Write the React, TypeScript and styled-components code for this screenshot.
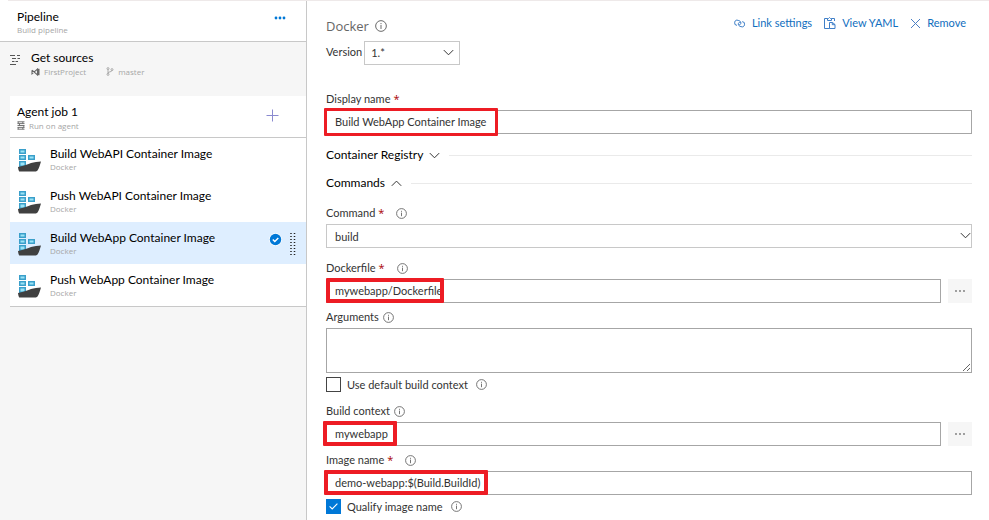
import React, { useState } from 'react';
import styled, { createGlobalStyle, css } from 'styled-components';

const GlobalStyle = createGlobalStyle`
  * { box-sizing: border-box; }
  body {
    margin: 0;
    background: #fff;
    color: #333;
    font-family: Lato, "Open Sans", sans-serif;
    font-size: 11px;
  }
  button, input, select, textarea { font: inherit; color: inherit; margin: 0; }
  button { border: 0; padding: 0; background: none; cursor: pointer; }
  svg { display: block; flex: none; }
`;

const Page = styled.div`
  display: flex;
  min-height: 100vh;
`;

/* ---------- Sidebar ---------- */

const Sidebar = styled.aside`
  flex: 0 0 307px;
  display: flex;
  flex-direction: column;
  background: #f6f6f6;
  border-right: 1px solid #c8c8c8;
`;

const Entry = styled.div`
  display: flex;
  height: 42px;
  padding: 7px 10px 0 7px;
`;

const PipelineHeader = styled(Entry)`
  padding: 8px 20px 0 17px;
  background: #fff;
  border-bottom: 1px solid #c8c8c8;
`;

const Sources = styled(Entry)`
  height: 54px;
  padding-left: 9px;
  gap: 9px;
`;

const JobCard = styled.section`
  margin-left: 10px;
  background: #fff;
  border-bottom: 1px solid #c8c8c8;
`;

const JobHeader = styled(Entry)`
  padding-right: 27px;
  border-bottom: 1px solid #c8c8c8;
`;

const TaskList = styled.ul`
  list-style: none;
  margin: 0;
  padding: 0;
`;

const Task = styled.li<{ $selected?: boolean }>`
  display: flex;
  height: 42px;
  padding: 7px 10px 0 8px;
  gap: 9px;
  background: ${(p) => (p.$selected ? '#deeeff' : '#fff')};
`;

const EntryText = styled.div`
  flex: 1;
  min-width: 0;
`;

const EntryTitle = styled.div`
  font-size: 12px;
  line-height: 18px;
  color: #000;
  white-space: nowrap;
`;

const EntrySub = styled.div`
  display: flex;
  align-items: center;
  gap: 4px;
  font-family: "Open Sans", "Noto Sans", sans-serif;
  font-size: 8px;
  line-height: 8px;
  color: #a6a6a6;
`;

const Branch = styled.span`
  display: flex;
  align-items: center;
  gap: 4px;
  margin-left: 16px;
`;

const SideButton = styled.button`
  display: flex;
  align-self: flex-start;
  align-items: center;
  height: 20px;
`;

const AddButton = styled(SideButton)`
  height: 24px;
`;

const SourcesIcon = styled.div`
  padding-top: 6px;
`;

const TaskIcon = styled.div`
  padding-top: 4px;
`;

const TaskMarks = styled.div`
  display: flex;
  align-items: flex-start;
  align-self: flex-start;
  gap: 8px;
  padding-top: 4px;
`;

/* ---------- Details ---------- */

const Details = styled.main`
  flex: 1;
  min-width: 0;
  padding: 16px 17px 6px 19px;
`;

const DetailsHeader = styled.header`
  display: flex;
  justify-content: space-between;
  align-items: flex-start;
`;

const Heading = styled.h1`
  display: flex;
  align-items: center;
  gap: 6px;
  margin: 0;
  font-family: "Open Sans", "Noto Sans", sans-serif;
  font-size: 13px;
  font-weight: 400;
  line-height: 20px;
  color: #666;
`;

const Actions = styled.div`
  display: flex;
  gap: 12px;
  padding-right: 6px;
`;

const Action = styled.button`
  display: flex;
  align-items: center;
  gap: 6px;
  line-height: 14px;
  color: #106ebe;
`;

const VersionRow = styled.div`
  display: flex;
  gap: 2px;
  margin-top: 5px;
  line-height: 22px;
`;

const SelectBox = styled.div<{ $compact?: boolean }>`
  position: relative;
  width: ${(p) => (p.$compact ? '96px' : '100%')};

  select {
    display: block;
    width: 100%;
    height: 24px;
    padding: 0 20px 0 ${(p) => (p.$compact ? '6px' : '8px')};
    border: 1px solid #c8c8c8;
    border-radius: 0;
    background: #fff;
    appearance: none;
  }

  svg {
    position: absolute;
    top: 8px;
    right: ${(p) => (p.$compact ? '6px' : '1px')};
    pointer-events: none;
  }
`;

type RowSize = 'first' | 'tall' | 'medium';

const rowHeights: Record<RowSize, number> = { first: 45, tall: 31, medium: 30 };

const LabelRow = styled.div<{ $size?: RowSize }>`
  display: flex;
  align-items: flex-end;
  height: ${(p) => (p.$size ? rowHeights[p.$size] : 25)}px;
  padding-bottom: 4px;
  line-height: 14px;
`;

const Required = styled.span`
  margin-left: 3px;
  font-family: "Open Sans", "Noto Sans", sans-serif;
  line-height: 10px;
  color: #a80000;
`;

const Info = styled.span<{ $gap: number }>`
  display: flex;
  margin-left: ${(p) => p.$gap}px;
  padding-bottom: 1px;
`;

const FieldRow = styled.div`
  position: relative;
  display: flex;
  gap: 7px;
`;

const fieldBorder = css`
  border: 1px solid #a6a6a6;
  border-radius: 0;
  background: #fff;
`;

const TextInput = styled.input`
  ${fieldBorder}
  flex: 1;
  min-width: 0;
  height: 24px;
  padding: 0 8px 1px;
`;

const TextArea = styled.textarea`
  ${fieldBorder}
  display: block;
  width: 100%;
  height: 45px;
  resize: both;
`;

const BrowseButton = styled.button`
  width: 24px;
  height: 24px;
  display: flex;
  align-items: center;
  justify-content: center;
  background: #f6f6f6;
`;

const Highlight = styled.div<{ $width: number; $left: number; $thick?: boolean }>`
  position: absolute;
  top: ${(p) => (p.$thick ? '-1px' : '-2px')};
  bottom: ${(p) => (p.$thick ? '0' : '-2px')};
  left: ${(p) => p.$left}px;
  width: ${(p) => p.$width}px;
  border: ${(p) => (p.$thick ? 4 : 3)}px solid #ed1c24;
  border-radius: 1px;
  pointer-events: none;
`;

const SectionToggle = styled.button`
  display: flex;
  align-items: center;
  width: 100%;
  height: 28px;
  gap: 6px;
  font-size: 12px;
  line-height: 18px;
  color: #000;

  &::after {
    content: '';
    flex: 1;
    height: 1px;
    margin-left: 3px;
    background: #eaeaea;
  }
`;

const Sections = styled.div`
  padding: 7px 0 2px;
`;

const CheckRow = styled.div`
  display: flex;
  align-items: center;
  height: 15px;
  margin-top: 4px;
  line-height: 14px;
`;

const Checkbox = styled.input`
  appearance: none;
  width: 15px;
  height: 15px;
  margin-right: 6px;
  border: 1px solid #444;
  background: #fff;

  &:checked {
    border-color: #0078d7;
    background: #0078d7;
  }
`;

const CheckBoxWrap = styled.span`
  position: relative;
  display: flex;

  svg {
    position: absolute;
    left: 3px;
    top: 4px;
    pointer-events: none;
  }
`;

/* ---------- Icons ---------- */

const InfoIcon = ({ size = 11 }: { size?: number }) => (
  <svg width={size} height={size} viewBox="0 0 11 11" fill="none" stroke="#666" strokeWidth="0.9">
    <circle cx="5.5" cy="5.5" r="4.9" />
    <path d="M5.5 4.6V8.2M5.5 2.8v1" />
  </svg>
);

const Chevron = ({ up }: { up?: boolean }) => (
  <svg width="11" height="7" viewBox="0 0 11 7" fill="none" stroke="#333" strokeWidth="1">
    <path d={up ? 'M.8 5.8 5.5 1.1l4.7 4.7' : 'M.8 1.1l4.7 4.7 4.7-4.7'} />
  </svg>
);

const Dots = ({ color, r }: { color: string; r: number }) => (
  <svg width="12" height="4" viewBox="0 0 12 4" fill={color}>
    <circle cx="2" cy="2" r={r} />
    <circle cx="6" cy="2" r={r} />
    <circle cx="10" cy="2" r={r} />
  </svg>
);

const LinesIcon = () => (
  <svg width="13" height="11" viewBox="0 0 13 11" stroke="#555" strokeWidth="1">
    <path d="M1 .5h5M8 .5h3M3 3.5h4M8.5 3.5H11M3 6.5h2.5M6.5 6.5H9M1 9.5h6" />
  </svg>
);

const StudioIcon = () => (
  <svg width="9" height="8" viewBox="0 0 9 8" fill="none" stroke="#666">
    <path d="M1 2.2v3.6L6.5 1v6L1 2.2" strokeWidth="1.1" />
    <path d="M7.7.8v6.4" strokeWidth="1.6" />
  </svg>
);

const BranchIcon = () => (
  <svg width="8" height="9" viewBox="0 0 8 9" fill="none" stroke="#999" strokeWidth="0.8">
    <circle cx="2" cy="1.6" r="1" />
    <circle cx="2" cy="7.4" r="1" />
    <circle cx="6" cy="2.6" r="1" />
    <path d="M2 2.6v3.8M6 3.6C6 5 2.2 4.6 2 6" />
  </svg>
);

const ServerIcon = () => (
  <svg width="8" height="9" viewBox="0 0 8 9" fill="none" stroke="#666" strokeWidth="0.9">
    <path d="M.5.8h7M.5 2.6h7M.5 4.5h7M.5 6.4h7M.5 8.2h7M1.2.8v1.8M5.8.8v1.8M1.2 6.4v1.8M5.8 6.4v1.8M2.5 2.6v1.9M6.8 4.5v1.9" />
  </svg>
);

const PlusIcon = () => (
  <svg width="13" height="13" viewBox="0 0 13 13" stroke="#8a8ad0" strokeWidth="1">
    <path d="M6.5.5v12M.5 6.5h12" />
  </svg>
);

const ShipIcon = () => (
  <svg width="23" height="23" viewBox="0 0 23 23">
    <g fill="#3a9fca">
      <path d="M1 0h7v5H1zM1 6h7v5H1zM10 6h7v5h-7zM1 12h7v6H1z" />
    </g>
    <g fill="#9be3f5">
      <path d="M2.500 1.500h4v2h-4zM2.500 7.500h4v2h-4zM11.500 7.500h4v2h-4zM2.500 13.500h4v3h-4z" />
    </g>
    <path d="M0 18C6 17 10 15 13 14c3-1 7-1.500 10-1.600C22 16 21 19 19.500 21.500 18.800 22.400 18 22.500 17 22.500H1.200C.5 21 .2 20 0 18z" fill="#404040" />
  </svg>
);

const CheckCircle = () => (
  <svg width="13" height="13" viewBox="0 0 13 13" fill="none">
    <circle cx="6.5" cy="6.5" r="6.4" fill="#fff" />
    <circle cx="6.5" cy="6.5" r="5.7" fill="#0078d7" />
    <path d="M3.8 6.5l2 2 3.5-3.6" stroke="#fff" strokeWidth="1.4" />
  </svg>
);

const Grip = () => (
  <svg width="6" height="22" viewBox="0 0 6 22" stroke="#222" strokeDasharray="1 2">
    <path d="M1 0v22M4.500 0v22" strokeWidth="1.5" />
  </svg>
);

const LinkIcon = () => (
  <svg width="13" height="9" viewBox="0 0 13 9" fill="none" stroke="#3f7fc8" strokeWidth="1">
    <path d="M4 6.4A2.6 2.6 0 1 1 5.2 1.4C7 1.6 8.2 3 7.8 4.6 7.5 5.6 6.4 6 5.4 5.6" />
    <path d="M9.2 2.6A2.6 2.6 0 1 1 8 7.6C6.2 7.4 5 6 5.4 4.4 5.7 3.4 6.8 3 7.8 3.4" />
  </svg>
);

const YamlIcon = () => (
  <svg width="12" height="12" viewBox="0 0 12 12" fill="none" stroke="#3f7fc8" strokeWidth="1">
    <path d="M5.500 11.500h-5v-10h3M7.500 1.500h3v2.500M3.500 3.500v-2h1l1-1 1 1h1v2z" />
    <path d="M5.500 5.500h3l2.500 2v4H5.500zM8.300 5.500v2.200H11" />
  </svg>
);

const CloseIcon = () => (
  <svg width="11" height="11" viewBox="0 0 11 11" stroke="#4a7fc4" strokeWidth="1">
    <path d="M1 1l9 9M10 1l-9 9" />
  </svg>
);

const Tick = () => (
  <svg width="9" height="7" viewBox="0 0 9 7" fill="none" stroke="#fff" strokeWidth="1.1">
    <path d="M.6 3.4l2.6 2.5L8.4.7" />
  </svg>
);

/* ---------- Composed parts ---------- */

type LabelProps = { id: string; text: string; required?: boolean; info?: number; size?: RowSize };

const FieldLabel = ({ id, text, required, info, size }: LabelProps) => (
  <LabelRow $size={size}>
    <label htmlFor={id}>
      {text}
      {required && <Required>*</Required>}
    </label>
    {info !== undefined && (
      <Info $gap={info}>
        <InfoIcon />
      </Info>
    )}
  </LabelRow>
);

const CheckField = ({ id, text, initial }: { id: string; text: string; initial: boolean }) => {
  const [checked, setChecked] = useState(initial);
  return (
    <CheckRow>
      <CheckBoxWrap>
        <Checkbox id={id} type="checkbox" checked={checked} onChange={(e) => setChecked(e.target.checked)} />
        {checked && <Tick />}
      </CheckBoxWrap>
      <label htmlFor={id}>{text}</label>
      <Info $gap={8}>
        <InfoIcon />
      </Info>
    </CheckRow>
  );
};

const tasks = [
  'Build WebAPI Container Image',
  'Push WebAPI Container Image',
  'Build WebApp Container Image',
  'Push WebApp Container Image',
];

const Frame = styled.div`
  &::before {
    content: '';
    position: absolute;
    top: 0;
    left: 8px;
    right: 0;
    height: 1px;
    background: #eee9e9;
  }
`;

export default function App() {
  return (
    <Frame>
      <GlobalStyle />
      <Page>
        <Sidebar>
          <PipelineHeader>
            <EntryText>
              <EntryTitle>Pipeline</EntryTitle>
              <EntrySub>Build pipeline</EntrySub>
            </EntryText>
            <SideButton aria-label="More actions">
              <Dots color="#0078d7" r={1.4} />
            </SideButton>
          </PipelineHeader>
          <Sources>
            <SourcesIcon>
              <LinesIcon />
            </SourcesIcon>
            <EntryText>
              <EntryTitle>Get sources</EntryTitle>
              <EntrySub>
                <StudioIcon />
                FirstProject
                <Branch>
                  <BranchIcon />
                  master
                </Branch>
              </EntrySub>
            </EntryText>
          </Sources>
          <JobCard>
            <JobHeader>
              <EntryText>
                <EntryTitle>Agent job 1</EntryTitle>
                <EntrySub>
                  <ServerIcon />
                  Run on agent
                </EntrySub>
              </EntryText>
              <AddButton aria-label="Add a task">
                <PlusIcon />
              </AddButton>
            </JobHeader>
            <TaskList>
              {tasks.map((name, i) => (
                <Task key={name} $selected={i === 2}>
                  <TaskIcon>
                    <ShipIcon />
                  </TaskIcon>
                  <EntryText>
                    <EntryTitle>{name}</EntryTitle>
                    <EntrySub>Docker</EntrySub>
                  </EntryText>
                  {i === 2 && (
                    <TaskMarks>
                      <CheckCircle />
                      <Grip />
                    </TaskMarks>
                  )}
                </Task>
              ))}
            </TaskList>
          </JobCard>
        </Sidebar>

        <Details>
          <DetailsHeader>
            <Heading>
              Docker <InfoIcon size={12} />
            </Heading>
            <Actions>
              <Action>
                <LinkIcon />
                Link settings
              </Action>
              <Action>
                <YamlIcon />
                View YAML
              </Action>
              <Action>
                <CloseIcon />
                Remove
              </Action>
            </Actions>
          </DetailsHeader>
          <VersionRow>
            <label htmlFor="version">Version</label>
            <SelectBox $compact>
              <select id="version" defaultValue="1.*">
                <option>1.*</option>
              </select>
              <Chevron />
            </SelectBox>
          </VersionRow>

          <FieldLabel id="display-name" text="Display name" required size="first" />
          <FieldRow>
            <TextInput id="display-name" defaultValue="Build WebApp Container Image" />
            <Highlight $left={-2} $width={174} />
          </FieldRow>

          <Sections>
            <SectionToggle aria-expanded="false">
              Container Registry <Chevron />
            </SectionToggle>
            <SectionToggle aria-expanded="true">
              Commands <Chevron up />
            </SectionToggle>
          </Sections>

          <FieldLabel id="command" text="Command" required info={12} />
          <SelectBox>
            <select id="command" defaultValue="build">
              <option>build</option>
            </select>
            <Chevron />
          </SelectBox>

          <FieldLabel id="dockerfile" text="Dockerfile" required info={12} size="tall" />
          <FieldRow>
            <TextInput id="dockerfile" defaultValue="mywebapp/Dockerfile" />
            <BrowseButton aria-label="Browse Dockerfile">
              <Dots color="#777" r={0.9} />
            </BrowseButton>
            <Highlight $left={0} $width={118} $thick />
          </FieldRow>

          <FieldLabel id="arguments" text="Arguments" info={4} />
          <TextArea id="arguments" />
          <CheckField id="default-context" text="Use default build context" initial={false} />

          <FieldLabel id="build-context" text="Build context" info={4} size="medium" />
          <FieldRow>
            <TextInput id="build-context" defaultValue="mywebapp" />
            <BrowseButton aria-label="Browse build context">
              <Dots color="#777" r={0.9} />
            </BrowseButton>
            <Highlight $left={-3} $width={74} $thick />
          </FieldRow>

          <FieldLabel id="image-name" text="Image name" required info={12} />
          <FieldRow>
            <TextInput id="image-name" defaultValue="demo-webapp:$(Build.BuildId)" />
            <Highlight $left={-2} $width={164} $thick />
          </FieldRow>
          <CheckField id="qualify" text="Qualify image name" initial />
        </Details>
      </Page>
    </Frame>
  );
}
